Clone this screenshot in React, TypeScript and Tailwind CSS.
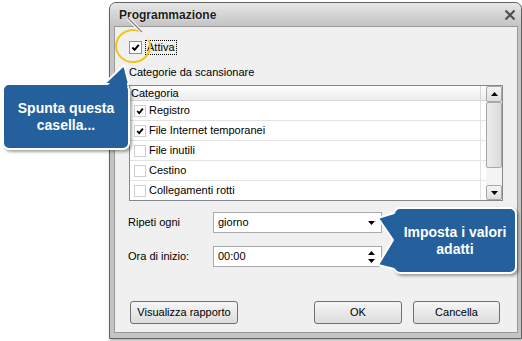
import React from "react";

const ROWS = [
  { label: "Registro", checked: true },
  { label: "File Internet temporanei", checked: true },
  { label: "File inutili", checked: false },
  { label: "Cestino", checked: false },
  { label: "Collegamenti rotti", checked: false },
];

function Check({ className }: { className?: string }) {
  return (
    <svg viewBox="0 0 10 10" className={className}>
      <path d="M1.5 5 L4 7.6 L8.6 2" fill="none" stroke="#000" strokeWidth="2.2" />
    </svg>
  );
}

function Box({ checked, big }: { checked: boolean; big?: boolean }) {
  return (
    <div
      className={
        big
          ? "flex h-[13px] w-[13px] items-center justify-center border border-[#8f8f8f] bg-white"
          : "flex h-[12px] w-[12px] items-center justify-center border border-[#cfcfcf] bg-white"
      }
    >
      {checked && <Check className={big ? "h-[9px] w-[9px]" : "h-[8px] w-[8px]"} />}
    </div>
  );
}

function Arrow({ up }: { up?: boolean }) {
  return (
    <svg width="7" height="4" viewBox="0 0 7 4">
      <path d={up ? "M0 4 L3.5 0 L7 4 Z" : "M0 0 L7 0 L3.5 4 Z"} fill="#000" />
    </svg>
  );
}

function Button({ children, w }: { children: React.ReactNode; w: string }) {
  return (
    <div
      className={`${w} flex h-[23px] items-center justify-center rounded-[3px] border border-[#707070] bg-gradient-to-b from-[#f6f6f6] to-[#dcdcdc] text-black`}
    >
      {children}
    </div>
  );
}

export default function App() {
  return (
    <div className="relative h-[341px] w-[522px] overflow-hidden bg-white font-['Liberation_Sans',Arial,sans-serif] text-[11px] text-black">
      {/* window */}
      <div className="ml-[109px] mt-[2px] flex h-[337px] w-[413px] flex-col rounded-t-[7px] border border-[#626262] bg-[#c4c4c4] shadow-[1px_2px_3px_rgba(0,0,0,0.3)]">
        <div className="flex h-[23px] items-center justify-between rounded-t-[6px] bg-gradient-to-b from-[#e8e8e8] via-[#d4d4d4] to-[#c4c4c4] pl-[9px] pr-[5px]">
          <span className="text-[12px] font-bold text-[#1c1c1c] [text-shadow:0_0_2px_#fff]">
            Programmazione
          </span>
          <svg width="12" height="12" viewBox="0 0 12 12">
            <path d="M1.5 1.5 L10.5 10.5 M10.5 1.5 L1.5 10.5" stroke="#505050" strokeWidth="2.2" />
          </svg>
        </div>

        <div className="mb-[5px] ml-[4px] mr-[3px] flex flex-1 flex-col border border-[#999] bg-[#f0f0f0] pl-[14px] pt-[14px]">
          <div className="flex h-[13px] items-center">
            <Box checked big />
            <span className="ml-[3px] border border-dotted border-black px-[1px] leading-[13px]">
              Attiva
            </span>
          </div>

          <div className="mt-[11px] h-[14px] leading-[14px]">Categorie da scansionare</div>

          {/* list */}
          <div className="mt-[6px] flex h-[116px] w-[374px] overflow-hidden border border-[#828790] bg-white">
            <div className="flex w-[356px] flex-col">
              <div className="flex h-[15px] shrink-0 border-b border-[#d5d5d5] bg-gradient-to-b from-white to-[#ececec]">
                <div className="w-[351px] border-r border-[#d5d5d5] pl-[1px] leading-[14px]">
                  Categoria
                </div>
              </div>
              {ROWS.map((r) => (
                <div key={r.label} className="flex h-[20px] shrink-0 border-b border-[#e3e3e3]">
                  <div className="flex w-[351px] items-center border-r border-[#e3e3e3] pl-[4px]">
                    <Box checked={r.checked} />
                    <span className="ml-[3px]">{r.label}</span>
                  </div>
                </div>
              ))}
            </div>
            <div className="flex w-[16px] flex-col bg-[#f4f4f4]">
              <div className="flex h-[16px] items-center justify-center rounded-[2px] border border-[#a8a8a8] bg-gradient-to-b from-[#f4f4f4] to-[#dedede]">
                <Arrow up />
              </div>
              <div className="h-[66px] rounded-[2px] border border-[#a8a8a8] bg-gradient-to-r from-[#ececec] to-[#dcdcdc]" />
              <div className="h-[17px]" />
              <div className="flex h-[15px] items-center justify-center rounded-[2px] border border-[#a8a8a8] bg-gradient-to-b from-[#f4f4f4] to-[#dedede]">
                <Arrow />
              </div>
            </div>
          </div>

          <div className="mt-[11px] flex items-center">
            <span className="-ml-[1px] w-[85px]">Ripeti ogni</span>
            <div className="flex h-[21px] w-[169px] items-center justify-between border border-[#a9a9a9] bg-white pl-[4px] pr-[6px]">
              <span>giorno</span>
              <Arrow />
            </div>
          </div>

          <div className="mt-[13px] flex items-center">
            <span className="-ml-[1px] w-[85px]">Ora di inizio:</span>
            <div className="flex h-[21px] w-[169px] items-center justify-between border border-[#a9a9a9] bg-white pl-[4px] pr-[6px]">
              <span>00:00</span>
              <div className="flex flex-col gap-[4px]">
                <Arrow up />
                <Arrow />
              </div>
            </div>
          </div>

          <div className="mt-[34px] flex">
            <div className="ml-[1px]">
              <Button w="w-[108px]">Visualizza rapporto</Button>
            </div>
            <div className="ml-[76px]">
              <Button w="w-[88px]">OK</Button>
            </div>
            <div className="ml-[11px]">
              <Button w="w-[87px]">Cancella</Button>
            </div>
          </div>
        </div>
      </div>

      {/* callouts */}
      <div className="absolute left-[2px] top-[83px] flex h-[67px] w-[128px] flex-col items-center justify-center rounded-[7px] border-2 border-white bg-[#24609b] text-[14px] font-bold leading-[17px] text-white shadow-[2px_2px_3px_rgba(0,0,0,0.35)]">
        <span>Spunta questa</span>
        <span>casella...</span>
      </div>
      <div className="absolute left-[393px] top-[207px] flex h-[67px] w-[124px] flex-col items-center justify-center rounded-[7px] border-2 border-white bg-[#24609b] text-[14px] font-bold leading-[17px] text-white shadow-[2px_2px_3px_rgba(0,0,0,0.35)]">
        <span>Imposta i valori</span>
        <span>adatti</span>
      </div>

      <svg className="pointer-events-none absolute left-0 top-0" width="522" height="341">
        <path
          d="M149 40.5 A17 16 0 1 1 140.2 31.5"
          fill="none"
          stroke="#f0c419"
          strokeWidth="2"
          strokeLinecap="round"
        />
        <line x1="128" y1="18" x2="142" y2="32" stroke="#fff" strokeWidth="3.5" />
        <line x1="128" y1="18" x2="142" y2="32" stroke="#8a8a8a" strokeWidth="1.5" />

        <polygon points="104,84 124,65 129,84" fill="#24609b" stroke="#fff" strokeWidth="2" strokeLinejoin="round" />
        <polygon points="106,87 124,69 127.6,87" fill="#24609b" />

        <polygon points="397,213 378,218 393,240 378,265 397,269" fill="#24609b" />
        <polyline
          points="394,213 378,218 393,240 378,265 394,269"
          fill="none"
          stroke="#fff"
          strokeWidth="2"
          strokeLinejoin="round"
        />
      </svg>
    </div>
  );
}
